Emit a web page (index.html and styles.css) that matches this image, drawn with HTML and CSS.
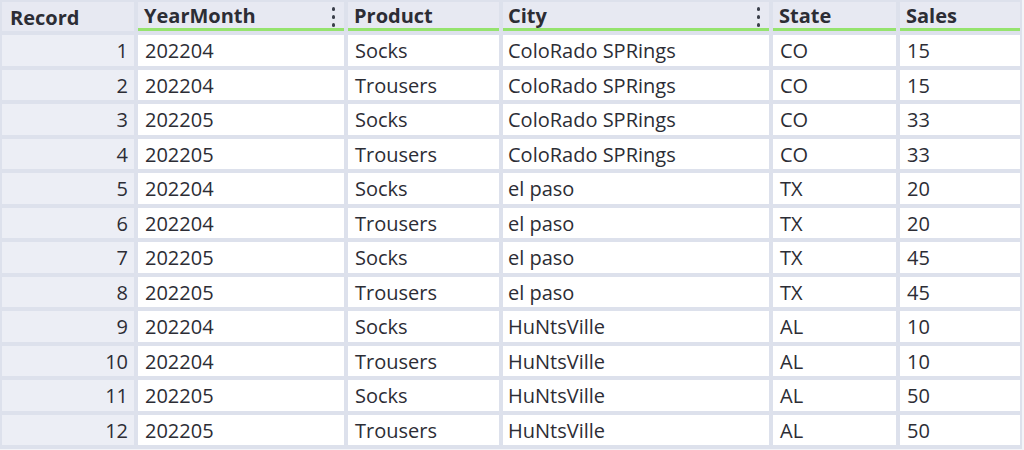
FILE: index.html
```html
<!DOCTYPE html>
<html>
<head>
<meta charset="utf-8">
<link rel="stylesheet" href="styles.css">
</head>
<body>
<div class="grid">
  <div class="hd rec">Record</div>
  <div class="hd">YearMonth<span class="kebab"><i></i><i></i><i></i></span></div>
  <div class="hd">Product</div>
  <div class="hd city">City<span class="kebab"><i></i><i></i><i></i></span></div>
  <div class="hd">State</div>
  <div class="hd">Sales</div>

  <div class="num">1</div><div class="c">202204</div><div class="c">Socks</div><div class="c city">ColoRado SPRings</div><div class="c">CO</div><div class="c">15</div>
  <div class="num">2</div><div class="c">202204</div><div class="c">Trousers</div><div class="c city">ColoRado SPRings</div><div class="c">CO</div><div class="c">15</div>
  <div class="num">3</div><div class="c">202205</div><div class="c">Socks</div><div class="c city">ColoRado SPRings</div><div class="c">CO</div><div class="c">33</div>
  <div class="num">4</div><div class="c">202205</div><div class="c">Trousers</div><div class="c city">ColoRado SPRings</div><div class="c">CO</div><div class="c">33</div>
  <div class="num">5</div><div class="c">202204</div><div class="c">Socks</div><div class="c city">el paso</div><div class="c">TX</div><div class="c">20</div>
  <div class="num">6</div><div class="c">202204</div><div class="c">Trousers</div><div class="c city">el paso</div><div class="c">TX</div><div class="c">20</div>
  <div class="num">7</div><div class="c">202205</div><div class="c">Socks</div><div class="c city">el paso</div><div class="c">TX</div><div class="c">45</div>
  <div class="num">8</div><div class="c">202205</div><div class="c">Trousers</div><div class="c city">el paso</div><div class="c">TX</div><div class="c">45</div>
  <div class="num">9</div><div class="c">202204</div><div class="c">Socks</div><div class="c city">HuNtsVille</div><div class="c">AL</div><div class="c">10</div>
  <div class="num">10</div><div class="c">202204</div><div class="c">Trousers</div><div class="c city">HuNtsVille</div><div class="c">AL</div><div class="c">10</div>
  <div class="num">11</div><div class="c">202205</div><div class="c">Socks</div><div class="c city">HuNtsVille</div><div class="c">AL</div><div class="c">50</div>
  <div class="num">12</div><div class="c">202205</div><div class="c">Trousers</div><div class="c city">HuNtsVille</div><div class="c">AL</div><div class="c">50</div>
</div>
</body>
</html>
```
FILE: styles.css
```css
html, body {
  margin: 0;
  padding: 0;
  background: #f3f4f8;
}
body {
  font-family: "Open Sans", "Noto Sans", sans-serif;
  color: #2c2d35;
}
.grid {
  display: grid;
  grid-template-columns: 132px 206px 151px 266px 123px 120px;
  grid-template-rows: 29px repeat(12, 30.5px);
  column-gap: 4px;
  row-gap: 4px;
  padding: 2px 2px 4px 2px;
  width: max-content;
  background: #dde1ec;
  font-size: 20px;
  line-height: 1;
}
.hd {
  background: #e7e9f2;
  font-weight: 700;
  font-size: 20px;
  display: flex;
  align-items: center;
  padding-left: 6px;
  padding-top: 2px;
  border-bottom: 3px solid #95e36e;
  position: relative;
}
.hd.rec {
  border-bottom: none;
  padding-left: 8px;
}
.kebab {
  position: absolute;
  right: 9px;
  top: 5px;
  display: flex;
  flex-direction: column;
  gap: 4.5px;
}
.kebab i {
  display: block;
  width: 3.5px;
  height: 3.5px;
  border-radius: 50%;
  background: #3a3f4a;
}
.num {
  background: #eceef5;
  display: flex;
  align-items: center;
  justify-content: flex-end;
  padding-right: 6px;
  padding-top: 2px;
}
.c {
  background: #ffffff;
  display: flex;
  align-items: center;
  padding-left: 7px;
  padding-top: 2px;
}
.c.city, .hd.city {
  padding-left: 5px;
}
```
